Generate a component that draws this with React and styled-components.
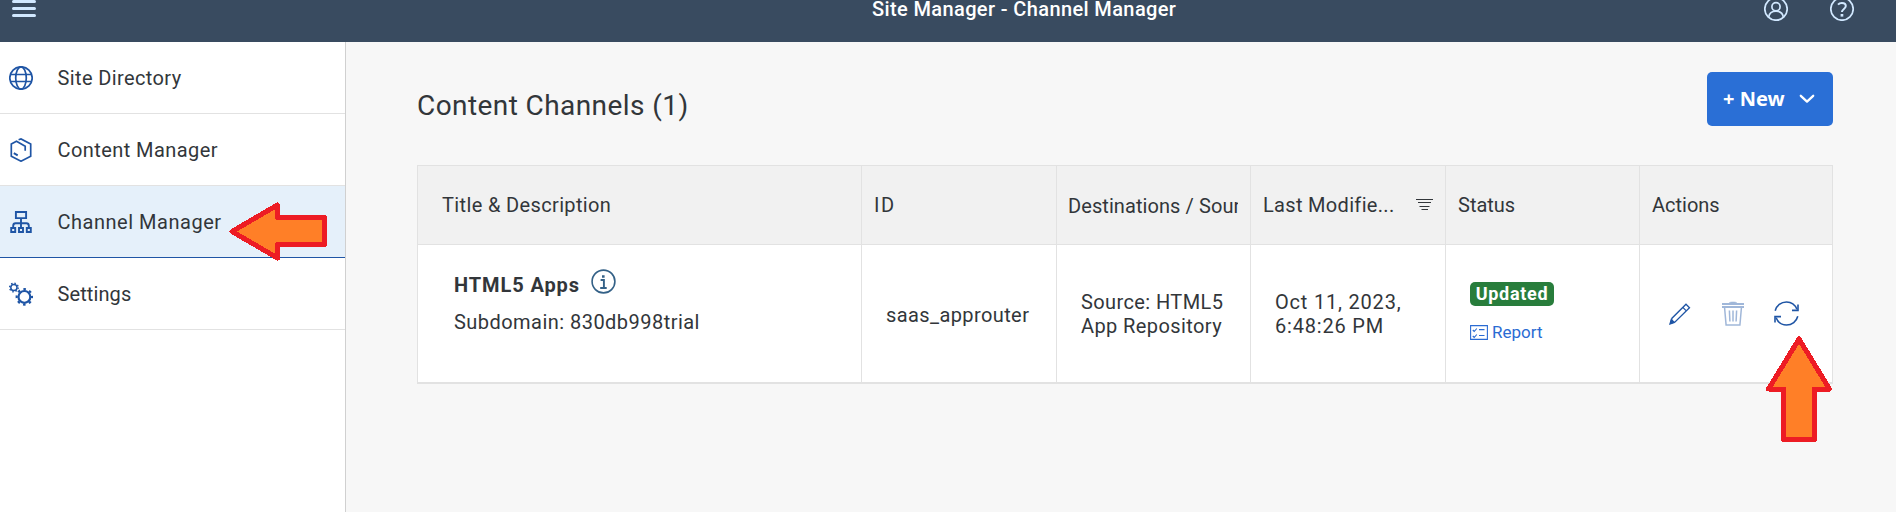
import React from 'react';
import styled, { createGlobalStyle, css } from 'styled-components';

const Global = createGlobalStyle`
  *, *::before, *::after { box-sizing: border-box; }
  body {
    margin: 0;
    background: #fff;
    overflow: hidden;
    font-family: Roboto, "Liberation Sans", sans-serif;
    font-size: 20px;
    color: #32363a;
  }
`;

const Page = styled.div`
  position: relative;
  width: 1896px;
  height: 512px;
  display: flex;
  flex-direction: column;
  overflow: hidden;
`;

const TopBar = styled.header`
  flex: none;
  height: 67px;
  margin-top: -25px;
  padding: 0 42px 0 12px;
  display: flex;
  align-items: center;
  background: #394b60;
  color: #d1e8ff;
`;

const TopTitle = styled.h1`
  margin: 0 auto 0 836px;
  font-size: 20px;
  line-height: 24px;
  font-weight: 500;
  letter-spacing: 0.38px;
  color: #fff;
`;

const TopActions = styled.div`
  display: flex;
  gap: 42px;
`;

const Icon = styled.svg`
  display: block;
  flex: none;
  fill: none;
  stroke: currentColor;
  stroke-width: ${(p) => p.$weight || 1.7};
`;

const Body = styled.div`
  flex: 1;
  display: flex;
`;

const Sidebar = styled.nav`
  flex: none;
  width: 346px;
  background: #fff;
  border-right: 1px solid #d0d0d0;
`;

const NavItem = styled.a`
  height: 72px;
  padding-left: 9px;
  display: flex;
  align-items: center;
  gap: 24.5px;
  letter-spacing: ${(p) => p.$spacing || 0}px;
  border-bottom: 1px solid #e2e2e2;
  & > svg { color: #1f55a5; }
  ${(p) => p.$active && css`
    background: #e5f0fa;
    border-bottom-color: #1f55a5;
  `}
`;

const Main = styled.main`
  flex: 1;
  padding: 30px 63px 0 71px;
  background: #f7f7f7;
`;

const Toolbar = styled.div`
  display: flex;
  justify-content: space-between;
  align-items: flex-start;
  height: 93px;
`;

const Heading = styled.h2`
  margin: 17px 0 0;
  font-size: 28px;
  line-height: 34px;
  font-weight: 400;
  letter-spacing: 0.42px;
`;

const NewButton = styled.button`
  width: 126px;
  height: 54px;
  padding: 0 17px 0 16px;
  display: flex;
  align-items: center;
  justify-content: space-between;
  border: 0;
  border-radius: 5px;
  background: #2a6fd6;
  color: #fff;
  font: 700 20px/26px "Noto Sans", sans-serif;
`;

const Table = styled.section`
  width: 1416px;
  border: 1px solid #e2e2e2;
  border-bottom-width: 2px;
  background: #fff;
`;

const Row = styled.div`
  display: grid;
  grid-template-columns: 444px 195px 194px 195px 194px 1fr;
`;

const HeadRow = styled(Row)`
  height: 79px;
  background: #f1f1f1;
  border-bottom: 1px solid #e2e2e2;
`;

const DataRow = styled(Row)`
  height: 137px;
`;

const HeadCell = styled.div`
  min-width: 0;
  padding: 0 12px 0 ${(p) => p.$indent || 12}px;
  display: flex;
  align-items: center;
  justify-content: space-between;
  white-space: nowrap;
  letter-spacing: ${(p) => p.$spacing || 0}px;
  border-right: 1px solid #e2e2e2;
  &:last-child { border-right: 0; }
`;

const ClippedLabel = styled.span`
  overflow: hidden;
  margin-left: -1px;
  padding-top: 2px;
`;

const Cell = styled.div`
  min-width: 0;
  padding-left: ${(p) => p.$indent || 24}px;
  display: flex;
  flex-direction: column;
  justify-content: center;
  line-height: 24px;
  white-space: nowrap;
  letter-spacing: ${(p) => p.$spacing ?? 0.4}px;
  border-right: 1px solid #e2e2e2;
  &:last-child { border-right: 0; }
`;

const TitleCell = styled(Cell)`
  justify-content: flex-start;
  padding-top: 24px;
`;

const TitleLine = styled.div`
  display: flex;
  align-items: flex-start;
  gap: 11px;
  height: 41px;
  color: #346187;
`;

const Name = styled.strong`
  padding-top: 4px;
  font-weight: 700;
  letter-spacing: 0.9px;
  color: #32363a;
`;

const IdText = styled.span`
  padding-top: 2px;
`;

const Badge = styled.span`
  align-self: flex-start;
  width: 84px;
  height: 24px;
  border-radius: 5px;
  background: #287d3c;
  color: #fff;
  font-size: 18px;
  font-weight: 700;
  line-height: 24px;
  text-align: center;
  letter-spacing: 0.7px;
`;

const StatusCell = styled(Cell)`
  justify-content: flex-start;
  padding-top: 37px;
`;

const ReportLink = styled.a`
  margin-top: 14px;
  display: flex;
  align-items: center;
  gap: 4px;
  font-size: 17px;
  letter-spacing: 0;
  color: #2a6bd3;
`;

const ActionCell = styled(Cell)`
  flex-direction: row;
  justify-content: flex-start;
  align-items: center;
  gap: 30px;
  color: #1f55a5;
`;

const Faded = styled.span`
  opacity: 0.42;
`;

const Callout = styled.svg`
  position: absolute;
  left: ${(p) => p.$x}px;
  top: ${(p) => p.$y}px;
  fill: #ff7f27;
  stroke: #ed1c24;
  stroke-width: 5;
  stroke-linejoin: round;
  shape-rendering: crispEdges;
`;

const MenuIcon = () => (
  <Icon width="24" height="18" viewBox="0 0 24 18" $weight={3} strokeLinecap="round">
    <path d="M1.5 1.5h21M1.5 8.5h21M1.5 15.5h21" />
  </Icon>
);
const UserIcon = () => (
  <Icon width="24" height="24" viewBox="0 0 24 24">
    <circle cx="12" cy="12" r="11.2" />
    <circle cx="12" cy="9.8" r="4.1" />
    <path d="M4.600 20.300c.6-3.700 3.500-6.100 7.400-6.100s6.800 2.400 7.400 6.100" />
  </Icon>
);
const HelpIcon = () => (
  <Icon width="24" height="24" viewBox="0 0 24 24">
    <circle cx="12" cy="12" r="11.2" />
    <path d="M8 7.600C9 6.500 10.300 6 11.900 6c2.300 0 3.900 1.200 3.900 3.100 0 2.800-3.900 2.900-3.900 6" strokeWidth="2" />
    <path d="M10.600 18.300h2.700" strokeWidth="2.6" />
  </Icon>
);
const GlobeIcon = () => (
  <Icon width="24" height="24" viewBox="0 0 24 24">
    <circle cx="12" cy="12" r="11.2" />
    <ellipse cx="12" cy="12" rx="5.3" ry="11.2" />
    <path d="M1.500 8.500h21M1.500 15.500h21" />
  </Icon>
);
const ContentIcon = () => (
  <Icon width="24" height="24" viewBox="0 0 24 24">
    <path d="M9.600 1.700 12 .900l9.700 5.100v12.300L12 23.200 2.300 18.300V6L7.500 3.300l8.700 4.900v4.600" />
    <path d="M4.800 15.200l3.900 2.200" strokeWidth="2" />
  </Icon>
);
const ChannelIcon = () => (
  <Icon width="24" height="24" viewBox="0 0 24 24" $weight={1.9}>
    <path d="M6.900 2h10.200v6.100H6.900zM12 8.100V18M4.200 18v-2.200c0-1.700.8-2.500 2.400-2.500h10.800c1.600 0 2.400.8 2.400 2.500V18" />
    <path d="M2.200 18h4v4h-4zM10 18h4v4h-4zM17.800 18h4v4h-4z" />
  </Icon>
);
const SettingsIcon = () => (
  <Icon width="24" height="24" viewBox="0 0 24 24">
    <circle cx="4.9" cy="5.5" r="3.1" strokeWidth="1.5" />
    <circle cx="4.9" cy="5.5" r="4.3" strokeWidth="1.4" strokeDasharray="1.5 1.877" />
    <circle cx="15.4" cy="14.9" r="5.9" strokeWidth="2.2" />
    <circle cx="15.4" cy="14.9" r="7.7" strokeWidth="2.2" strokeDasharray="2.6 3.448" strokeDashoffset="1.3" />
  </Icon>
);
const InfoIcon = () => (
  <Icon width="25" height="25" viewBox="0 0 25 25" $weight={1.6}>
    <circle cx="12.5" cy="12.5" r="11.4" />
    <path d="M9.600 11h3.300v7.600M9.200 19h6.500" strokeWidth="1.9" />
    <path d="M11 7.500h2.600" strokeWidth="2.5" />
  </Icon>
);
const FilterIcon = () => (
  <Icon width="17" height="12" viewBox="0 0 17 12" $weight={1}>
    <path d="M0 .5h17M2 3.500h13M3.500 7.500h10M5.500 10.500h6.500" />
  </Icon>
);
const ReportIcon = () => (
  <Icon width="18" height="15" viewBox="0 0 18 15" $weight={1.1}>
    <path d="M.6.600h16.800v13.800H.6z" />
    <path d="M9 4.600h5.500M9 10.500h5.500M2.800 5l1.400 1.500 2.600-3M2.800 11l1.400 1.500 2.600-3" />
  </Icon>
);
const ChevronIcon = () => (
  <Icon width="17" height="10" viewBox="0 0 17 10" $weight={2.3} strokeLinecap="round" strokeLinejoin="round">
    <path d="M1.800 1.800 8 7.600l6.200-5.800" />
  </Icon>
);
const EditIcon = () => (
  <Icon width="24" height="25" viewBox="0 0 24 25" $weight={1.3}>
    <path d="M2.600 22.300 4 17.200 18 3.200l3.500 3.500-14.200 14.100zM14.800 6.400l3.500 3.500" />
    <path d="M2 23l1.300-4.500 3 3z" fill="currentColor" />
  </Icon>
);
const TrashIcon = () => (
  <Icon width="22" height="25" viewBox="1 0 22 25" $weight={1.5}>
    <path d="M1 3h22M1 6h22" strokeWidth="1.8" />
    <path d="M8 2.200C8.500.500 15.500.500 16 2.200z" fill="currentColor" strokeWidth="0.5" />
    <path d="M3.600 7l1.500 17h13.800l1.500-17M8.400 9.500l.5 11M12 9.500v11M15.600 9.500l-.5 11" />
  </Icon>
);
const SyncIcon = () => (
  <Icon width="25" height="25" viewBox="0 0 25 25" $weight={1.6}>
    <path d="M1.200 9.800C2.500 4.700 7 1 12.500 1c4.700 0 8.600 2.800 10.400 7.300M23.800 15.200C22.500 20.300 18 24 12.500 24c-4.700 0-8.600-2.800-10.400-7.300" />
    <path d="M24 3.500v5.900h-6M1 21.500v-5.900h6" />
  </Icon>
);

const NAV = [
  { label: 'Site Directory', icon: GlobeIcon, spacing: 0.38 },
  { label: 'Content Manager', icon: ContentIcon, spacing: 0.43 },
  { label: 'Channel Manager', icon: ChannelIcon, spacing: 0.52 },
  { label: 'Settings', icon: SettingsIcon, spacing: 0.1 },
];

export default function App() {
  return (
    <>
      <Global />
      <Page>
        <TopBar>
          <MenuIcon />
          <TopTitle>Site Manager - Channel Manager</TopTitle>
          <TopActions>
            <UserIcon />
            <HelpIcon />
          </TopActions>
        </TopBar>
        <Body>
          <Sidebar>
            {NAV.map(({ label, icon: NavIcon, spacing }) => (
              <NavItem key={label} $spacing={spacing} $active={label === 'Channel Manager'}>
                <NavIcon />
                {label}
              </NavItem>
            ))}
          </Sidebar>
          <Main>
            <Toolbar>
              <Heading>Content Channels (1)</Heading>
              <NewButton>
                + New
                <ChevronIcon />
              </NewButton>
            </Toolbar>
            <Table>
              <HeadRow>
                <HeadCell $indent={24} $spacing={0.36}>Title &amp; Description</HeadCell>
                <HeadCell $spacing={1.5}>ID</HeadCell>
                <HeadCell $spacing={0.08}>
                  <ClippedLabel>Destinations / Source</ClippedLabel>
                </HeadCell>
                <HeadCell $spacing={0.32}>
                  Last Modifie...
                  <FilterIcon />
                </HeadCell>
                <HeadCell>Status</HeadCell>
                <HeadCell>Actions</HeadCell>
              </HeadRow>
              <DataRow>
                <TitleCell $indent={36} $spacing={0.46}>
                  <TitleLine>
                    <Name>HTML5 Apps</Name>
                    <InfoIcon />
                  </TitleLine>
                  <span>Subdomain: 830db998trial</span>
                </TitleCell>
                <Cell>
                  <IdText>saas_approuter</IdText>
                </Cell>
                <Cell>
                  <span>Source: HTML5</span>
                  <span>App Repository</span>
                </Cell>
                <Cell $spacing={0.8}>
                  <span>Oct 11, 2023,</span>
                  <span>6:48:26 PM</span>
                </Cell>
                <StatusCell>
                  <Badge>Updated</Badge>
                  <ReportLink>
                    <ReportIcon />
                    Report
                  </ReportLink>
                </StatusCell>
                <ActionCell $indent={28}>
                  <EditIcon />
                  <Faded><TrashIcon /></Faded>
                  <SyncIcon />
                </ActionCell>
              </DataRow>
            </Table>
          </Main>
        </Body>
        <Callout $x={226} $y={200} width="104" height="64" viewBox="226 200 104 64">
          <path d="M232 231.500 277.500 205v12.500h47v27h-47V258z" />
        </Callout>
        <Callout $x={1763} $y={333} width="72" height="112" viewBox="1763 333 72 112">
          <path d="M1799 339l30.500 50h-15v50.500h-31V389h-15z" />
        </Callout>
      </Page>
    </>
  );
}
